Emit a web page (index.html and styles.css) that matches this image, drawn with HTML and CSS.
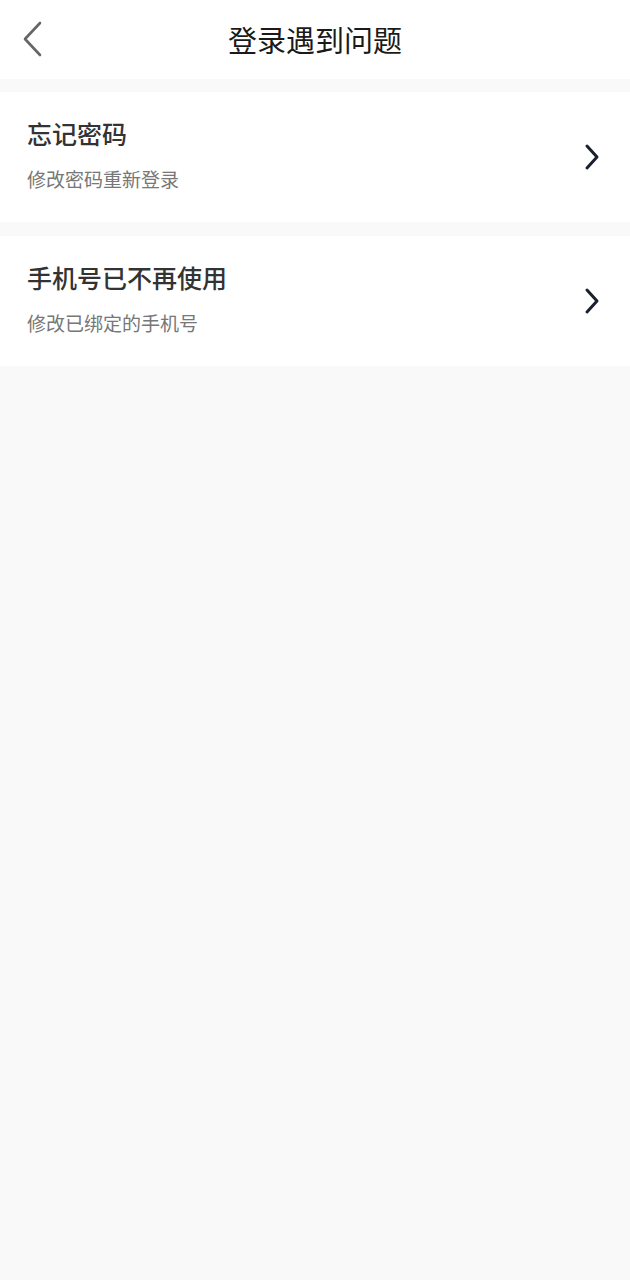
FILE: index.html
```html
<!DOCTYPE html>
<html lang="zh">
<head>
<meta charset="utf-8">
<link rel="stylesheet" href="styles.css">
</head>
<body>
<header class="nav">
  <svg class="back" width="22" height="36" viewBox="0 0 22 36"><path d="M19 2 L4 18 L19 34" fill="none" stroke="#666" stroke-width="2.6" stroke-linecap="round" stroke-linejoin="round"/></svg>
  <h1 class="nav-title">登录遇到问题</h1>
</header>
<main class="list">
  <a class="item">
    <div class="item-text">
      <div class="item-title">忘记密码</div>
      <div class="item-sub">修改密码重新登录</div>
    </div>
    <svg class="chev" width="16" height="28" viewBox="0 0 16 28"><path d="M3 3 L13 14 L3 25" fill="none" stroke="#1b2030" stroke-width="3" stroke-linecap="round" stroke-linejoin="round"/></svg>
  </a>
  <a class="item">
    <div class="item-text">
      <div class="item-title">手机号已不再使用</div>
      <div class="item-sub">修改已绑定的手机号</div>
    </div>
    <svg class="chev" width="16" height="28" viewBox="0 0 16 28"><path d="M3 3 L13 14 L3 25" fill="none" stroke="#1b2030" stroke-width="3" stroke-linecap="round" stroke-linejoin="round"/></svg>
  </a>
</main>
</body>
</html>
```

FILE: styles.css
```css
html, body {
  margin: 0;
  padding: 0;
  background: #f9f9f9;
  font-family: "Noto Sans CJK SC", "Noto Sans", sans-serif;
}
.nav {
  height: 79px;
  background: #fff;
  display: flex;
  align-items: center;
  justify-content: center;
  position: relative;
}
.back {
  position: absolute;
  left: 21px;
  top: 21px;
}
.nav-title {
  margin: 0;
  font-size: 29px;
  font-weight: 400;
  color: #1a1a1a;
  margin-top: -2px;
}
.list {
  padding-top: 13px;
  display: flex;
  flex-direction: column;
  gap: 14px;
}
.item {
  background: #fff;
  height: 130px;
  display: flex;
  align-items: center;
  justify-content: space-between;
  padding: 0 30px 0 27px;
  box-sizing: border-box;
}
.item-text {
  display: flex;
  flex-direction: column;
  gap: 16px;
  margin-top: -6px;
}
.item-title {
  font-size: 25px;
  font-weight: 500;
  color: #333;
  line-height: 34px;
}
.item-sub {
  font-size: 19px;
  color: #777;
  line-height: 26px;
}
.chev {
  display: block;
}
```
